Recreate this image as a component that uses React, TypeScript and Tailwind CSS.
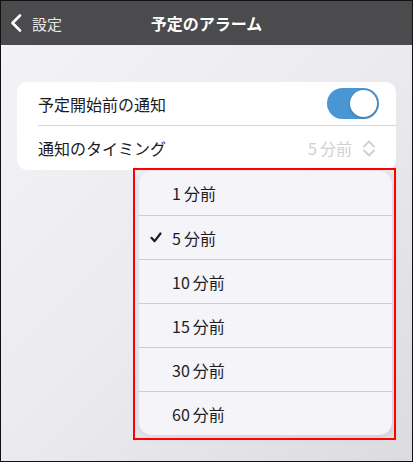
import React from "react";

const items = ["1分前", "5分前", "10分前", "15分前", "30分前", "60分前"];

function fmt(s: string) {
  const m = s.match(/^(\d+)(.*)$/);
  if (!m) return s;
  return (
    <>
      <span>{m[1]}</span>
      <span className="ml-[3px]">{m[2]}</span>
    </>
  );
}

export default function App() {
  return (
    <div
      className="w-[413px] h-[462px] border border-[#111] overflow-hidden flex flex-col"
      style={{ fontFamily: '"Noto Sans CJK JP", "Noto Sans", sans-serif' }}
    >
      <div className="h-[44px] shrink-0 bg-[#4b4a4d] grid grid-cols-[1fr_auto_1fr] items-center">
        <div className="flex items-center pl-[9px] gap-[9px]">
          <svg width="13" height="18" viewBox="0 0 13 18">
            <polyline points="10,1.5 2.5,9 10,16.5" fill="none" stroke="#ffffff" strokeWidth="2.6" strokeLinecap="round" strokeLinejoin="round" />
          </svg>
          <span className="text-[15px] text-[#e6e6e6] leading-none">設定</span>
        </div>
        <div className="text-[16px] font-bold text-white leading-none">予定のアラーム</div>
        <div />
      </div>
      <div className="relative flex-1 bg-gradient-to-br from-[#f3f2f7] via-[#ebeaef] to-[#dcdbe0]">
        <div className="mx-[16px] mt-[37px] bg-white rounded-[10px] overflow-hidden">
          <div className="h-[43px] flex items-center pl-[21px] pr-[17px] justify-between">
            <span className="text-[16px] text-[#1c1c1e]">予定開始前の通知</span>
            <div className="w-[52px] h-[31px] rounded-full bg-[#4a96d3] p-[2px] flex justify-end">
              <div className="w-[27px] h-[27px] rounded-full bg-white shadow-[0_1px_3px_rgba(0,0,0,0.25)]" />
            </div>
          </div>
          <div className="ml-[21px] h-px bg-[#d6d6da]" />
          <div className="h-[44px] flex items-center pl-[21px] pr-[20px] justify-between">
            <span className="text-[16px] text-[#1c1c1e]">通知のタイミング</span>
            <div className="flex items-center gap-[10px] text-[#d0d0d4]">
              <span className="text-[16px]">{fmt("5分前")}</span>
              <svg width="14" height="17" viewBox="0 0 14 17">
                <polyline points="2,6.5 7,1.5 12,6.5" fill="none" stroke="#cfcfd3" strokeWidth="1.8" strokeLinecap="round" strokeLinejoin="round" />
                <polyline points="2,10.5 7,15.5 12,10.5" fill="none" stroke="#cfcfd3" strokeWidth="1.8" strokeLinecap="round" strokeLinejoin="round" />
              </svg>
            </div>
          </div>
        </div>

        <div className="absolute left-[138px] top-[126px] w-[253px] bg-[#f5f4f9] rounded-[13px] shadow-[0_2px_8px_rgba(0,0,0,0.08)] overflow-hidden">
          {items.map((it, i) => (
            <div
              key={it}
              className={
                i > 0
                  ? "h-[44px] flex items-center pl-[11px] border-t border-[#cfced3]"
                  : "h-[44px] flex items-center pl-[11px]"
              }
            >
              <div className="w-[22px] flex items-center">
                {it === "5分前" && (
                  <svg width="12" height="11" viewBox="0 0 12 11">
                    <polyline points="1.5,5.8 4.6,9.2 10.5,1.5" fill="none" stroke="#1c1c1e" strokeWidth="2.2" strokeLinecap="round" strokeLinejoin="round" />
                  </svg>
                )}
              </div>
              <span className="text-[16px] text-[#1d1d1f]">{fmt(it)}</span>
            </div>
          ))}
        </div>

        <div className="absolute left-[132px] top-[123px] w-[263px] h-[272px] border-2 border-[#ff0000]" />
      </div>
    </div>
  );
}
